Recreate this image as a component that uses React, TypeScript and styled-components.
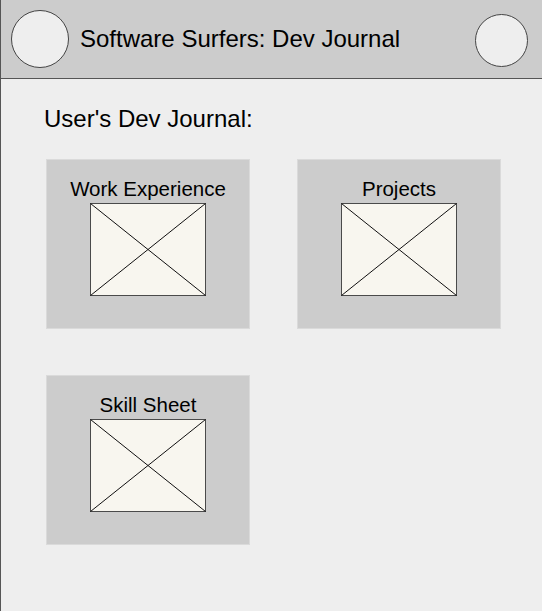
import React from "react";
import styled, { createGlobalStyle } from "styled-components";

const GlobalStyle = createGlobalStyle`
  html, body {
    margin: 0;
    padding: 0;
    background: #eeeeee;
  }
  * { box-sizing: border-box; }
`;

const Frame = styled.div`
  min-height: 611px;
  background: #eeeeee;
  border-left: 1px solid #555555;
  font-family: "Liberation Sans", Arial, sans-serif;
  color: #000;
`;

const Header = styled.header`
  height: 79px;
  display: flex;
  align-items: center;
  background: #cccccc;
  border-bottom: 1px solid #555555;
  padding: 0 14px 0 10px;
`;

const Avatar = styled.div<{ $size: number; $offset?: number }>`
  width: ${(p) => p.$size}px;
  height: ${(p) => p.$size}px;
  border-radius: 50%;
  background: #eeeeee;
  border: 1px solid #444444;
  flex-shrink: 0;
  margin-top: ${(p) => p.$offset ?? 0}px;
`;

const Title = styled.h1`
  flex: 1;
  margin: 0 0 0 11px;
  font-size: 24px;
  font-weight: normal;
  line-height: 28px;
  white-space: nowrap;
`;

const Main = styled.main`
  padding: 26px 0 0 45px;
`;

const Heading = styled.h2`
  margin: 0 0 0 -2px;
  font-size: 24px;
  font-weight: normal;
  line-height: 28px;
`;

const Grid = styled.div`
  display: grid;
  grid-template-columns: 204px 204px;
  column-gap: 47px;
  row-gap: 46px;
  margin-top: 26px;
`;

const Card = styled.div`
  height: 170px;
  background: #cccccc;
  border: 1px solid #dadada;
  display: flex;
  flex-direction: column;
  align-items: center;
  padding-top: 17px;
`;

const CardTitle = styled.div`
  font-size: 20.5px;
  line-height: 24px;
  white-space: nowrap;
`;

const Placeholder = styled.svg`
  display: block;
  width: 116px;
  height: 93px;
  margin-top: 2px;
`;

function ImagePlaceholder() {
  return (
    <Placeholder viewBox="0 0 116 93" preserveAspectRatio="none">
      <rect x="0.5" y="0.5" width="115" height="92" fill="#f8f6ef" stroke="#4a4a4a" strokeWidth="1" />
      <line x1="0.5" y1="0.5" x2="115.5" y2="92.5" stroke="#111" strokeWidth="1" />
      <line x1="115.5" y1="0.5" x2="0.5" y2="92.5" stroke="#111" strokeWidth="1" />
    </Placeholder>
  );
}

const sections = ["Work Experience", "Projects", "Skill Sheet"];

export default function App() {
  return (
    <>
      <GlobalStyle />
      <Frame>
        <Header>
          <Avatar $size={58} />
          <Title>Software Surfers: Dev Journal</Title>
          <Avatar $size={53} $offset={2} />
        </Header>
        <Main>
          <Heading>User's Dev Journal:</Heading>
          <Grid>
            {sections.map((s) => (
              <Card key={s}>
                <CardTitle>{s}</CardTitle>
                <ImagePlaceholder />
              </Card>
            ))}
          </Grid>
        </Main>
      </Frame>
    </>
  );
}
